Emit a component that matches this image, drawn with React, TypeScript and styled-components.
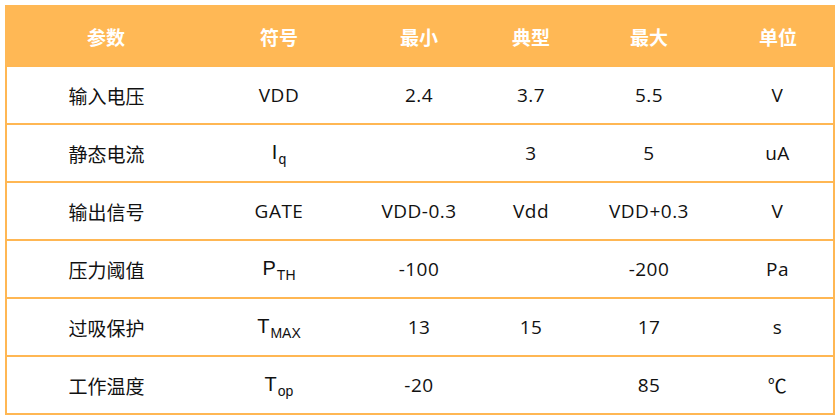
import React from "react";
import styled, { createGlobalStyle } from "styled-components";

const Global = createGlobalStyle`
  html, body { margin: 0; padding: 0; background: #ffffff; }
  body { font-family: "Open Sans", "Noto Sans CJK SC", sans-serif; }
`;

const Page = styled.div`
  padding: 5px 5px 0 5px;
  width: 828px;
`;

const Table = styled.table`
  width: 828px;
  border-collapse: collapse;
  table-layout: fixed;
  border: 2px solid #ffb753;
`;

const HeadCell = styled.th`
  background: #ffb855;
  color: #ffffff;
  font-weight: 700;
  font-size: 19px;
  height: 58px;
  padding: 0;
  text-align: center;
  border: 2px solid #ffb855;
  border-bottom-color: #ffb753;
  font-family: "Noto Sans CJK SC", sans-serif;
`;

const Cell = styled.td<{ $cjk?: boolean }>`
  height: 56px;
  padding: 0;
  text-align: center;
  font-size: ${(p) => (p.$cjk ? "19px" : "19px")};
  letter-spacing: ${(p) => (p.$cjk ? "0" : "0.5px")};
  color: #111111;
  border-top: 2px solid #ffb753;
  border-bottom: 2px solid #ffb753;
  font-family: ${(p) =>
    p.$cjk ? `"Noto Sans CJK SC", sans-serif` : `"Open Sans", "Noto Sans CJK SC", sans-serif`};
`;

const Sym = styled.span`
  font-family: "Liberation Sans", Arial, sans-serif;
  font-size: 20px;
  letter-spacing: 0;
`;

const Sub = styled.sub`
  font-size: 14px;
  vertical-align: -5px;
  margin-left: 1px;
`;

type Row = {
  name: string;
  sym: React.ReactNode;
  min: string;
  typ: string;
  max: string;
  unit: string;
};

const rows: Row[] = [
  { name: "输入电压", sym: "VDD", min: "2.4", typ: "3.7", max: "5.5", unit: "V" },
  {
    name: "静态电流",
    sym: (
      <Sym>
        I<Sub>q</Sub>
      </Sym>
    ),
    min: "",
    typ: "3",
    max: "5",
    unit: "uA",
  },
  { name: "输出信号", sym: "GATE", min: "VDD-0.3", typ: "Vdd", max: "VDD+0.3", unit: "V" },
  {
    name: "压力阈值",
    sym: (
      <Sym>
        P<Sub>TH</Sub>
      </Sym>
    ),
    min: "-100",
    typ: "",
    max: "-200",
    unit: "Pa",
  },
  {
    name: "过吸保护",
    sym: (
      <Sym>
        T<Sub>MAX</Sub>
      </Sym>
    ),
    min: "13",
    typ: "15",
    max: "17",
    unit: "s",
  },
  {
    name: "工作温度",
    sym: (
      <Sym>
        T<Sub>op</Sub>
      </Sym>
    ),
    min: "-20",
    typ: "",
    max: "85",
    unit: "℃",
  },
];

const widths = [200, 146, 134, 90, 146, 112];
const heads = ["参数", "符号", "最小", "典型", "最大", "单位"];

export default function App() {
  return (
    <>
      <Global />
      <Page>
        <Table>
          <colgroup>
            {widths.map((w, i) => (
              <col key={i} style={{ width: w }} />
            ))}
          </colgroup>
          <thead>
            <tr>
              {heads.map((h) => (
                <HeadCell key={h}>{h}</HeadCell>
              ))}
            </tr>
          </thead>
          <tbody>
            {rows.map((r) => (
              <tr key={r.name}>
                <Cell $cjk>{r.name}</Cell>
                <Cell>{r.sym}</Cell>
                <Cell>{r.min}</Cell>
                <Cell>{r.typ}</Cell>
                <Cell>{r.max}</Cell>
                <Cell>{r.unit}</Cell>
              </tr>
            ))}
          </tbody>
        </Table>
      </Page>
    </>
  );
}
